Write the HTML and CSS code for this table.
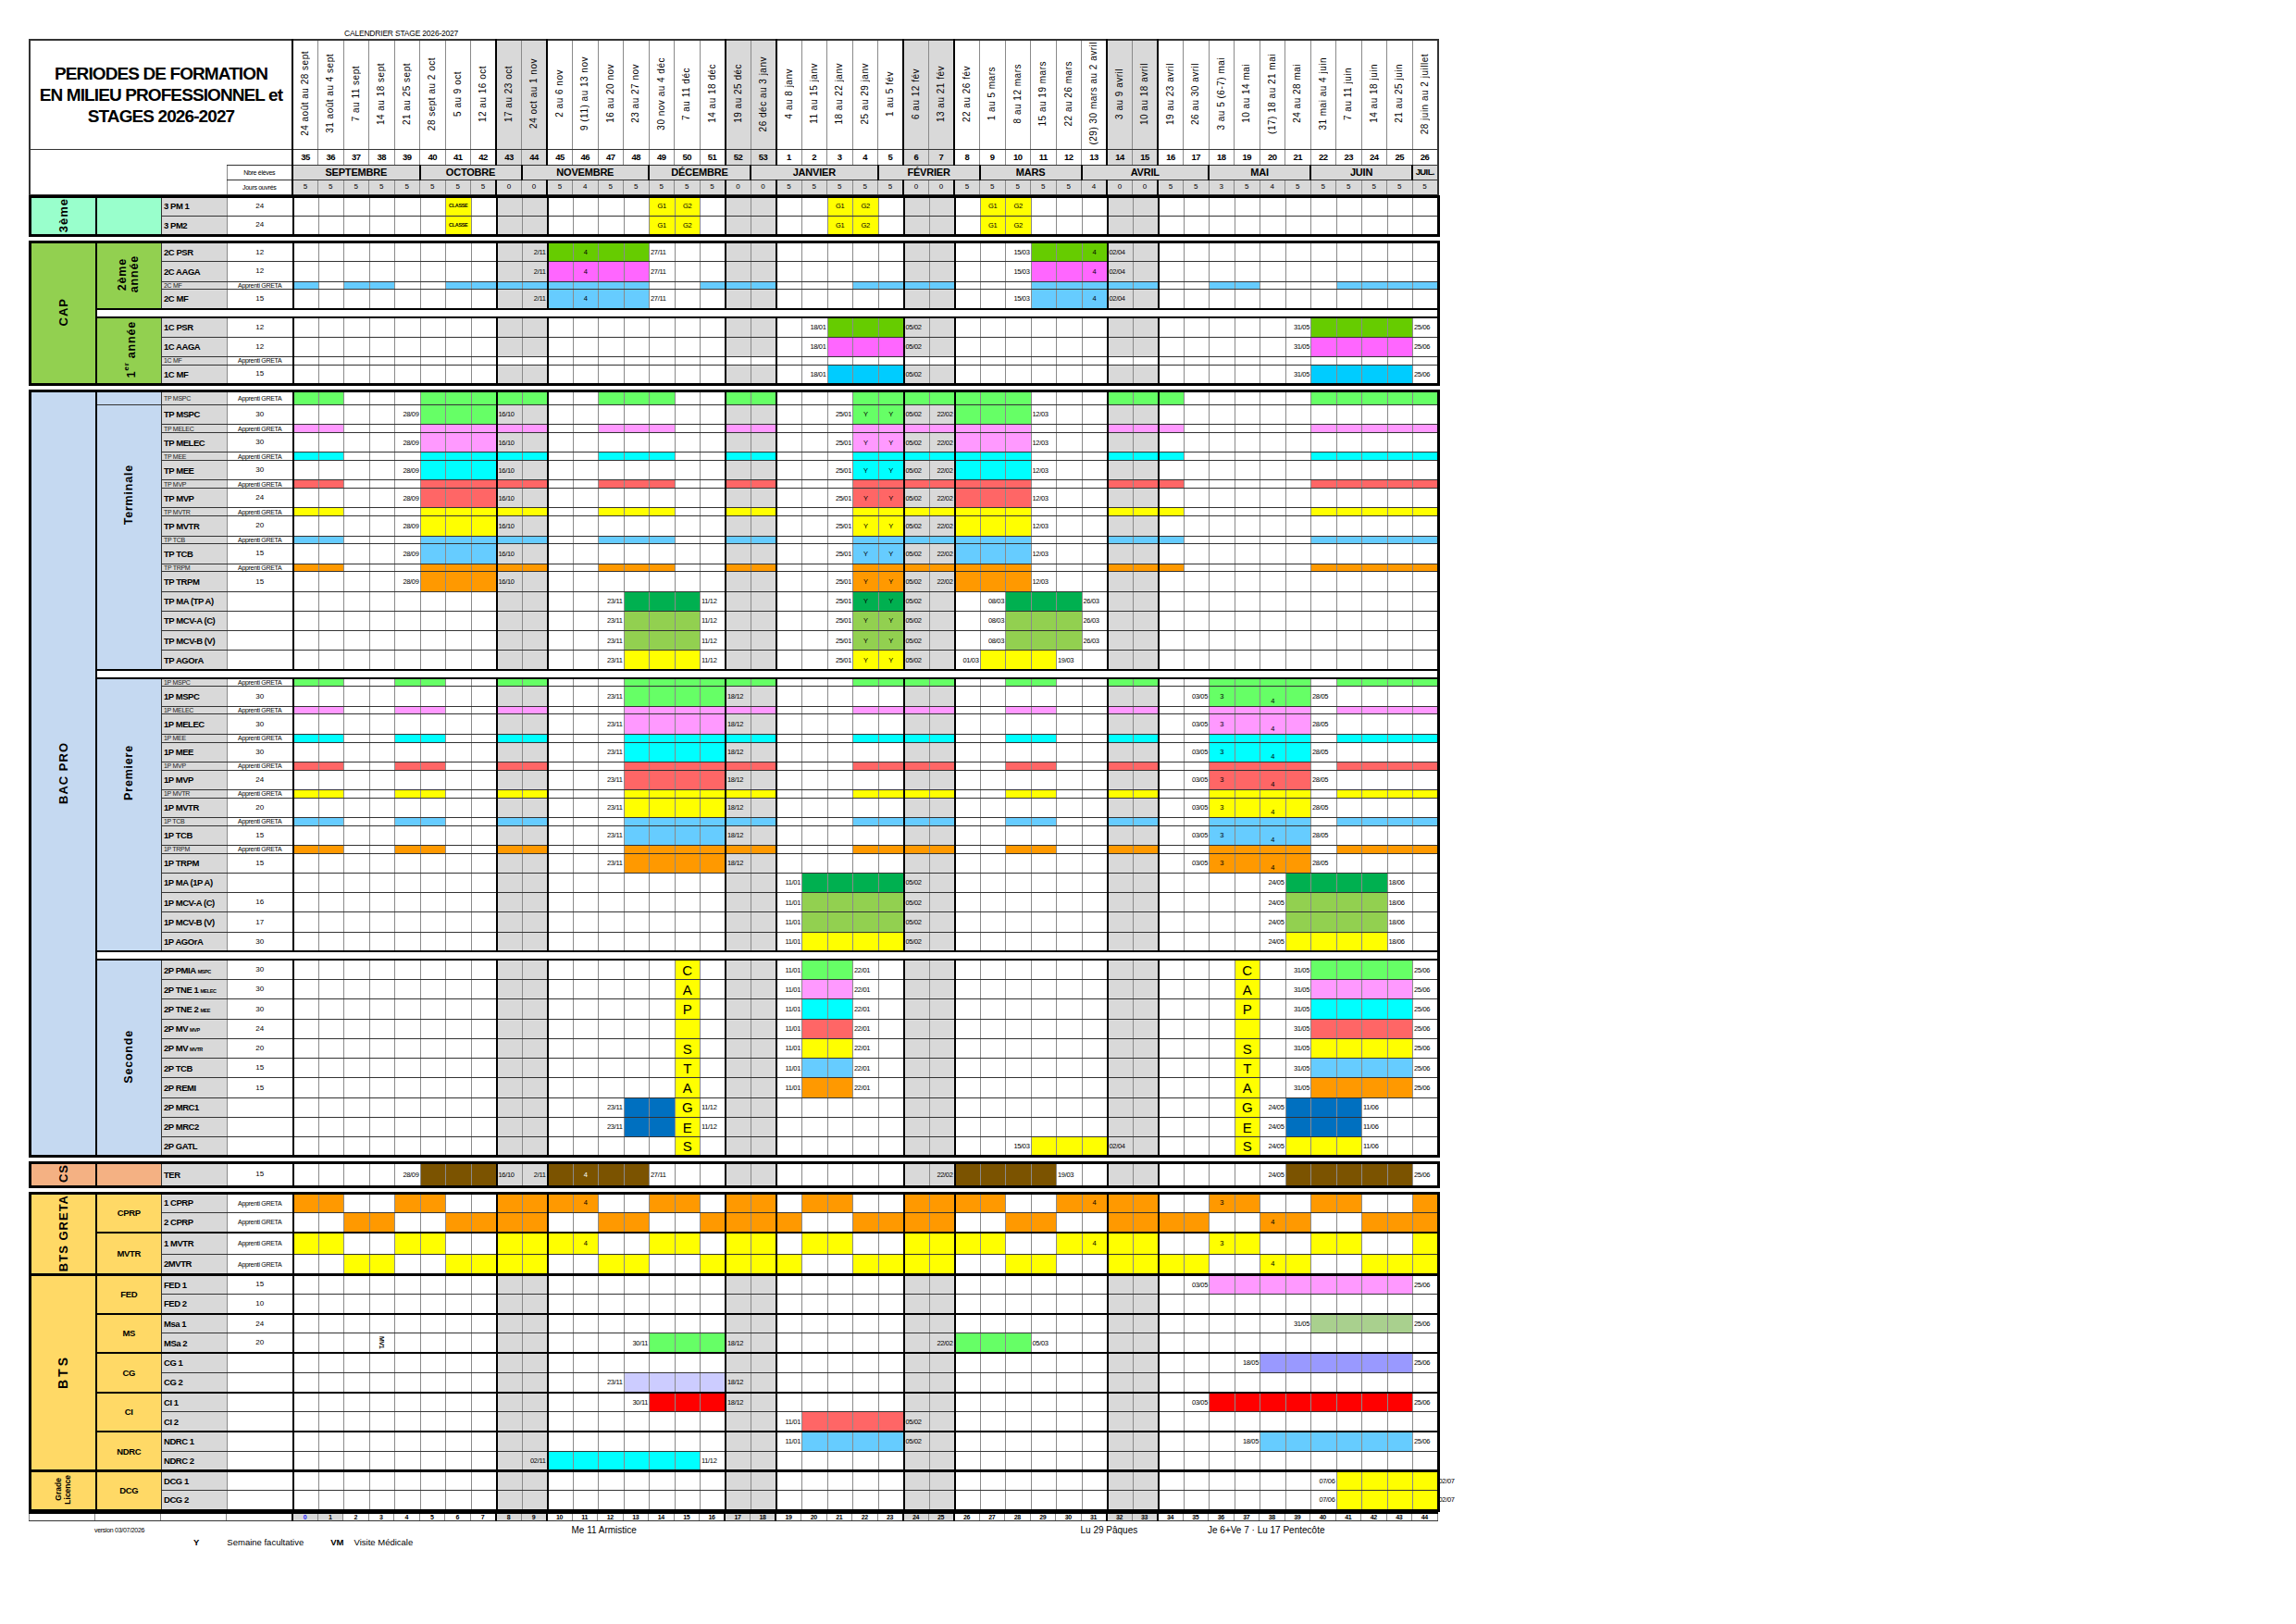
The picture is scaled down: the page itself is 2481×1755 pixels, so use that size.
FILE: index.html
```html
<!DOCTYPE html>
<html lang="fr">
<head>
<meta charset="utf-8">
<title>Calendrier stage 2026-2027</title>
<link rel="stylesheet" href="styles.css">
</head>
<body>
<div class="page">
  <div class="caption">CALENDRIER STAGE 2026-2027</div>
  <table class="grid head" id="head">
    <colgroup id="hcols"></colgroup>
    <tr class="r-dates" id="rDates">
      <th colspan="4" class="title">PERIODES DE FORMATION<br>EN MILIEU PROFESSIONNEL et<br>STAGES 2026-2027</th>
    </tr>
    <tr class="r-week" id="rWeek">
      <th colspan="3" rowspan="3" class="blank"></th>
      <th class="blank2"></th>
    </tr>
    <tr class="r-month" id="rMonth"><th class="hl">Nbre élèves</th></tr>
    <tr class="r-jours" id="rJours"><th class="hl">Jours ouvrés</th></tr>
  </table>
  <div id="body"></div>
  <div class="notes">
    <div class="nrow1">
      <span class="ver">version 03/07/2026</span>
      <span class="n-arm">Me 11 Armistice</span>
      <span class="n-paq">Lu 29 Pâques</span>
      <span class="n-pen">Je 6+Ve 7 · Lu 17 Pentecôte</span>
    </div>
    <div class="nrow2">
      <b class="k-y">Y</b><span class="v-y">Semaine facultative</span>
      <b class="k-vm">VM</b><span class="v-vm">Visite Médicale</span>
    </div>
  </div>
</div>
<script src="script.js"></script>
</body>
</html>
```

FILE: styles.css
```css
* { box-sizing: border-box; }
html, body { margin: 0; background: #fff; }
body { font-family: "Liberation Sans", Arial, Helvetica, sans-serif; color: #000; }

.page { padding: 31px 0 0 31px; width: 2481px; min-height: 1755px; }
.caption { height: 11px; padding-left: 341px; font-size: 8.5px; line-height: 11px; letter-spacing: -.2px; white-space: nowrap; }

.grid { border-collapse: collapse; table-layout: fixed; width: 1521.5px; }
.grid col.lc { width: 71px; }
.grid col.wc { width: 27.5px; }
.grid td, .grid th {
  padding: 0;
  border: 1px solid #8a8a8a;
  border-top-color: #333;
  border-bottom-color: #333;
  font-weight: normal;
  font-size: 8px;
  line-height: 1;
  text-align: center;
  vertical-align: middle;
  white-space: nowrap;
}
.rot { display: inline-block; writing-mode: vertical-rl; transform: rotate(180deg); white-space: nowrap; }

/* header */
.head { border: 2px solid #333; border-bottom: 0; }
.head .r-dates { height: 118px; }
.head .title { font-size: 19px; font-weight: bold; line-height: 23px; letter-spacing: -.9px; border-right: 2px solid #000; }
.head .d { font-size: 10px; letter-spacing: .5px; }
.head .r-week { height: 17px; }
.head .r-week th { font-weight: bold; font-size: 9.5px; letter-spacing: -.4px; }
.head .r-month { height: 16px; }
.head .m { background: #d9d9d9; font-weight: bold; font-size: 11px; letter-spacing: -.2px; border-left: 2px solid #000; }
.head .m.short { font-size: 9.5px; letter-spacing: -.6px; }
.head .r-jours { height: 16px; }
.head .j { background: #d9d9d9; font-size: 8px; }
.head .hl { font-size: 7px; letter-spacing: -.3px; border-right: 2px solid #000; }
.head .blank { border-right: none; }
.head .blank2 { border-left: none; border-right: 2px solid #000; }

/* blocks */
.blk { margin-top: 4px; border: 3px solid #000; }
.blk.first { margin-top: 0; }
tr.n { height: 21.25px; }
tr.t { height: 8.8px; }
tr.sp { height: 9px; }
.grid tr.sp td { border-top: 2px solid #000; border-bottom: 2px solid #000; background: #fff; }
.grid tr.gt td { border-top: 2px solid #000; }
.grid tbody.sec tr:first-child td { border-top: 3px solid #000; }

.grid .ca { border-right: 2px solid #000; font-weight: bold; font-size: 13px; letter-spacing: 1px; }
.grid .ca.sm { font-size: 8.5px; letter-spacing: 0; line-height: 10px; }
.grid .ca.wide { letter-spacing: 3px; font-size: 14px; }
.grid .cb { font-weight: bold; font-size: 12.5px; letter-spacing: .8px; line-height: 13px; border-right: 1px solid #333; }
.grid .cb.hz { font-size: 9.5px; letter-spacing: -.3px; }
.grid .cb.up { padding-bottom: 88px; }
.cb sup { font-size: 8px; }

.s-mint { background: #99ffcc; }
.s-cap { background: #92d050; }
.s-bac { background: #c5d9f1; }
.s-cs { background: #f4b183; }
.s-gold { background: #ffd966; }

.grid .lab { background: #d9d9d9; text-align: left; font-weight: bold; font-size: 9.5px; letter-spacing: -.45px; padding-left: 2px; }
.grid tr.t .lab { font-weight: normal; font-size: 7px; line-height: 7px; color: #222; letter-spacing: -.3px; }
.lab small { font-size: 5.5px; font-weight: bold; margin-left: 2px; }
.grid .num { font-size: 8px; border-right: 2px solid #000; }
.grid .num.ap, .grid tr.t .num { font-size: 7px; letter-spacing: -.3px; }

.grid .h { background: #d9d9d9; }
.grid .tk { border-left: 2px solid #000; }
.grid .x { font-size: 7.5px; letter-spacing: -.35px; }
.grid .al { text-align: left; padding-left: 1px; }
.grid .ar { text-align: right; padding-right: 1px; }
.grid .lo { vertical-align: bottom; padding-bottom: 1px; }
.grid .wt { color: #fff; }
.grid .cl { font-size: 5.5px; font-weight: bold; letter-spacing: -.3px; overflow: hidden; }
.grid .cap { font-size: 15px; letter-spacing: 0; }
.vt { display: inline-block; writing-mode: vertical-rl; font-weight: bold; font-size: 7px; }
.rel { position: relative; }
.out { position: absolute; left: 100%; top: 6px; padding-left: 2px; font-size: 7.5px; letter-spacing: -.35px; }

.f-y { background: #ffff00; }
.f-g1 { background: #66cc00; }
.f-mag { background: #ff66ff; }
.f-b { background: #66ccff; }
.f-cy2 { background: #00ccff; }
.f-lg { background: #66ff66; }
.f-pk { background: #ff99ff; }
.f-cy { background: #00ffff; }
.f-rd { background: #ff6666; }
.f-or { background: #ff9900; }
.f-dg { background: #00b050; }
.f-mg { background: #92d050; }
.f-db { background: #0070c0; }
.f-br { background: #7b5300; }
.f-sg { background: #a9d08e; }
.f-lv { background: #9999ff; }
.f-lv2 { background: #ccccff; }
.f-red { background: #ff0000; }

/* index row */
.idxrow { border: 1px solid #333; border-top: 2px solid #000; }
.idxrow tr { height: 9px; }
.grid.idxrow td { font-size: 7px; font-weight: bold; letter-spacing: -.3px; }
.grid.idxrow td.zero { color: #1a1aff; }

/* notes */
.notes { margin-top: 2px; }
.nrow1 { display: grid; grid-template-columns: repeat(4, 71px) repeat(45, 27.5px); height: 14px; align-items: center; white-space: nowrap; }
.ver { grid-column: 2 / span 3; font-size: 7px; letter-spacing: -.3px; }
.n-arm { grid-column: 16 / span 6; font-size: 10px; }
.n-paq { grid-column: 36 / span 5; font-size: 10px; }
.n-pen { grid-column: 41 / span 9; font-size: 10px; }
.nrow2 { display: flex; align-items: baseline; margin-top: 1px; white-space: nowrap; font-size: 9.5px; }
.k-y { margin-left: 178px; font-size: 9.5px; }
.v-y { margin-left: 30px; }
.k-vm { margin-left: 29px; }
.v-vm { margin-left: 11px; }
```

FILE: script.js
```js
(function () {
  var WEEKS = [];
  for (var w = 35; w <= 53; w++) WEEKS.push(w);
  for (w = 1; w <= 26; w++) WEEKS.push(w);
  var N = WEEKS.length;
  function idx(w) { return w >= 35 ? w - 35 : w + 18; }
  var HOL = new Set([8, 9, 17, 18, 24, 25, 32, 33]);
  var TK = new Set([0, 8, 10, 17, 19, 24, 26, 32, 34]);

  var DATES = ["24 août au 28 sept", "31 août au 4 sept", "7 au 11 sept", "14 au 18 sept", "21 au 25 sept",
    "28 sept au 2 oct", "5 au 9 oct", "12 au 16 oct", "17 au 23 oct", "24 oct au 1 nov", "2 au 6 nov",
    "9 (11) au 13 nov", "16 au 20 nov", "23 au 27 nov", "30 nov au 4 déc", "7 au 11 déc", "14 au 18 déc",
    "19 au 25 déc", "26 déc au 3 janv", "4 au 8 janv", "11 au 15 janv", "18 au 22 janv", "25 au 29 janv",
    "1 au 5 fév", "6 au 12 fév", "13 au 21 fév", "22 au 26 fév", "1 au 5 mars", "8 au 12 mars",
    "15 au 19 mars", "22 au 26 mars", "(29) 30 mars au 2 avril", "3 au 9 avril", "10 au 18 avril",
    "19 au 23 avril", "26 au 30 avril", "3 au 5 (6-7) mai", "10 au 14 mai", "(17) 18 au 21 mai",
    "24 au 28 mai", "31 mai au 4 juin", "7 au 11 juin", "14 au 18 juin", "21 au 25 juin", "28 juin au 2 juillet"];
  var JOURS = [5,5,5,5,5,5,5,5,0,0,5,4,5,5,5,5,5,0,0,5,5,5,5,5,0,0,5,5,5,5,5,4,0,0,5,5,3,5,4,5,5,5,5,5,5];
  var MONTHS = [["SEPTEMBRE",5],["OCTOBRE",4],["NOVEMBRE",5],["DÉCEMBRE",4],["JANVIER",5],["FÉVRIER",4],
    ["MARS",4],["AVRIL",5],["MAI",4],["JUIN",4],["JUIL.",1]];

  function cols() {
    var s = "";
    for (var i = 0; i < 4; i++) s += '<col class="lc">';
    for (i = 0; i < N; i++) s += '<col class="wc">';
    return s;
  }
  function cls(arr) { return arr.length ? ' class="' + arr.join(" ") + '"' : ""; }

  /* header */
  document.getElementById("hcols").innerHTML = cols();
  var rD = document.getElementById("rDates"), rW = document.getElementById("rWeek"),
      rM = document.getElementById("rMonth"), rJ = document.getElementById("rJours");
  var hD = "", hW = "", hM = "", hJ = "";
  for (var i = 0; i < N; i++) {
    var c = [];
    if (HOL.has(i)) c.push("h");
    if (TK.has(i)) c.push("tk");
    hD += "<th" + cls(["d"].concat(c)) + '><span class="rot">' + DATES[i] + "</span></th>";
    hW += "<th" + cls(c) + ">" + WEEKS[i] + "</th>";
    hJ += "<th" + cls(["j"].concat(TK.has(i) ? ["tk"] : [])) + ">" + JOURS[i] + "</th>";
  }
  MONTHS.forEach(function (m) {
    hM += '<th class="m' + (m[1] === 1 ? " short" : "") + '" colspan="' + m[1] + '">' + m[0] + "</th>";
  });
  rD.insertAdjacentHTML("beforeend", hD);
  rW.insertAdjacentHTML("beforeend", hW);
  rM.insertAdjacentHTML("beforeend", hM);
  rJ.insertAdjacentHTML("beforeend", hJ);

  /* row builders */
  var PAT_T = ["35-36","40-44","47-49","52-53","4-10","14-16","22-26"];
  var PAT_P = ["35-36","39-40","43-44","48-53","4-7","10-11","14-15","18-21","23-26"];
  var PAT_MF = ["35","37-38","41-48","51-53","4-7","11-15","18-19","23-26"];
  var P1 = ["35-36","39-40","43-46","49-50","52-53","2-3","6-9","12-15","18-19","22-23","26"];
  var P2 = ["37-38","41-44","47-48","51-1","4-7","10-11","14-17","20-21","24-26"];

  function g(l, c, pat) { return { thin: 1, l: l, n: "Apprenti GRETA", nog: 1, f: c ? [[c].concat(pat)] : [] }; }
  function r3(l) {
    return { l: l, n: "24", f: [["y","41","49-50","3-4","9-10"]],
      t: [[41,"CLASSE","cl"],[49,"G1"],[50,"G2"],[3,"G1"],[4,"G2"],[9,"G1"],[10,"G2"]] };
  }
  function c2(l, n, c) {
    return { l: l, n: n, f: [[c,"45-48","11-13"]],
      t: [[44,"2/11"],[46,"4"],[49,"27/11"],[10,"15/03"],[13,"4"],[14,"02/04"]] };
  }
  function c1(l, n, c) {
    return { l: l, n: n, f: [[c,"3-5","22-25"]], t: [[2,"18/01"],[6,"05/02"],[21,"31/05"],[26,"25/06"]] };
  }
  function tr(l, n, c) {
    return { l: l, n: n, f: [[c,"40-42","4-5","8-10"]],
      t: [[39,"28/09"],[43,"16/10"],[3,"25/01"],[4,"Y"],[5,"Y"],[6,"05/02"],[7,"22/02"],[11,"12/03"]] };
  }
  function ma(l, c) {
    return { l: l, n: "", f: [[c,"48-50","4-5","10-12"]],
      t: [[47,"23/11"],[51,"11/12"],[3,"25/01"],[4,"Y"],[5,"Y"],[6,"05/02"],[9,"08/03"],[13,"26/03"]] };
  }
  function pr(l, n, c) {
    return { l: l, n: n, f: [[c,"48-51","18-21"]],
      t: [[47,"23/11"],[52,"18/12"],[17,"03/05"],[18,"3"],[20,"4","lo"],[22,"28/05"]] };
  }
  function pm(l, n, c) {
    return { l: l, n: n, f: [[c,"2-5","21-24"]], t: [[1,"11/01"],[6,"05/02"],[20,"24/05"],[25,"18/06"]] };
  }
  function se(l, n, c, cap) {
    return { l: l, n: n, cap: cap, f: [[c,"2-3","22-25"]], t: [[1,"11/01"],[4,"22/01"],[21,"31/05"],[26,"25/06"]] };
  }
  function mrc(l, cap) {
    return { l: l, n: "", cap: cap, f: [["db","48-49","21-23"]], t: [[47,"23/11"],[51,"11/12"],[20,"24/05"],[24,"11/06"]] };
  }

  var BLOCKS = [
    [{ a: "3ème", ac: "s-mint", groups: [{ b: "", rows: [r3("3 PM 1"), r3("3 PM2")] }] }],
    [{ a: "CAP", ac: "s-cap", groups: [
      { b: "2ème<br>année", rows: [c2("2C PSR","12","g1"), c2("2C AAGA","12","mag"), g("2C MF","b",PAT_MF), c2("2C MF","15","b")] },
      "sp",
      { b: "1<sup>er</sup> année", rows: [c1("1C PSR","12","g1"), c1("1C AAGA","12","mag"), g("1C MF",null,[]), c1("1C MF","15","cy2")] }
    ] }],
    [{ a: "BAC PRO", ac: "s-bac", groups: [
      { b: "", rows: [g("TP MSPC","lg",PAT_T)] },
      { b: "Terminale", up: 1, rows: [
        tr("TP MSPC","30","lg"), g("TP MELEC","pk",PAT_T), tr("TP MELEC","30","pk"),
        g("TP MEE","cy",PAT_T), tr("TP MEE","30","cy"), g("TP MVP","rd",PAT_T), tr("TP MVP","24","rd"),
        g("TP MVTR","y",PAT_T), tr("TP MVTR","20","y"), g("TP TCB","b",PAT_T), tr("TP TCB","15","b"),
        g("TP TRPM","or",PAT_T), tr("TP TRPM","15","or"),
        ma("TP MA (TP A)","dg"), ma("TP MCV-A (C)","mg"), ma("TP MCV-B (V)","mg"),
        { l: "TP AGOrA", n: "", f: [["y","48-50","4-5","9-11"]],
          t: [[47,"23/11"],[51,"11/12"],[3,"25/01"],[4,"Y"],[5,"Y"],[6,"05/02"],[8,"01/03"],[12,"19/03"]] }
      ] },
      "sp",
      { b: "Premiere", up: 1, rows: [
        g("1P MSPC","lg",PAT_P), pr("1P MSPC","30","lg"), g("1P MELEC","pk",PAT_P), pr("1P MELEC","30","pk"),
        g("1P MEE","cy",PAT_P), pr("1P MEE","30","cy"), g("1P MVP","rd",PAT_P), pr("1P MVP","24","rd"),
        g("1P MVTR","y",PAT_P), pr("1P MVTR","20","y"), g("1P TCB","b",PAT_P), pr("1P TCB","15","b"),
        g("1P TRPM","or",PAT_P), pr("1P TRPM","15","or"),
        pm("1P MA (1P A)","","dg"), pm("1P MCV-A (C)","16","mg"), pm("1P MCV-B (V)","17","mg"), pm("1P AGOrA","30","y")
      ] },
      "sp",
      { b: "Seconde", rows: [
        se("2P PMIA<small>MSPC</small>","30","lg","C"), se("2P TNE 1<small>MELEC</small>","30","pk","A"),
        se("2P TNE 2<small>MEE</small>","30","cy","P"), se("2P MV<small>MVP</small>","24","rd",""),
        se("2P MV<small>MVTR</small>","20","y","S"), se("2P TCB","15","b","T"), se("2P REMI","15","or","A"),
        mrc("2P MRC1","G"), mrc("2P MRC2","E"),
        { l: "2P GATL", n: "", cap: "S", f: [["y","11-13","21-23"]], t: [[10,"15/03"],[14,"02/04"],[20,"24/05"],[24,"11/06"]] }
      ] }
    ] }],
    [{ a: "CS", ac: "s-cs", groups: [{ b: "", rows: [
      { l: "TER", n: "15", f: [["br","40-42","45-48","8-11","21-25"]],
        t: [[39,"28/09"],[43,"16/10"],[44,"2/11"],[46,"4","wt"],[49,"27/11"],[7,"22/02"],[12,"19/03"],[20,"24/05"],[26,"25/06"]] }
    ] }] }],
    [
      { a: "BTS GRETA", ac: "s-gold", groups: [
        { b: "CPRP", hz: 1, rows: [
          { l: "1 CPRP", n: "Apprenti GRETA", nog: 1, f: [["or"].concat(P1)], t: [[46,"4"],[13,"4"],[18,"3"]] },
          { l: "2 CPRP", n: "Apprenti GRETA", nog: 1, f: [["or"].concat(P2)], t: [[20,"4"]] }
        ] },
        { b: "MVTR", hz: 1, tk: 1, rows: [
          { l: "1 MVTR", n: "Apprenti GRETA", nog: 1, f: [["y"].concat(P1)], t: [[46,"4"],[13,"4"],[18,"3"]] },
          { l: "2MVTR", n: "Apprenti GRETA", nog: 1, f: [["y"].concat(P2)], t: [[20,"4"]] }
        ] }
      ] },
      { a: "BTS", ac: "s-gold wide", groups: [
        { b: "FED", hz: 1, rows: [
          { l: "FED 1", n: "15", f: [["pk","18-25"]], t: [[17,"03/05"],[26,"25/06"]] },
          { l: "FED 2", n: "10" }
        ] },
        { b: "MS", hz: 1, tk: 1, rows: [
          { l: "Msa 1", n: "24", f: [["sg","22-25"]], t: [[21,"31/05"],[26,"25/06"]] },
          { l: "MSa 2", n: "20", f: [["lg","49-51","8-10"]], t: [[38,"MV1","mv"],[48,"30/11"],[52,"18/12"],[7,"22/02"],[11,"05/03"]] }
        ] },
        { b: "CG", hz: 1, tk: 1, rows: [
          { l: "CG 1", n: "", f: [["lv","20-25"]], t: [[19,"18/05"],[26,"25/06"]] },
          { l: "CG 2", n: "", f: [["lv2","48-51"]], t: [[47,"23/11"],[52,"18/12"]] }
        ] },
        { b: "CI", hz: 1, tk: 1, rows: [
          { l: "CI 1", n: "", f: [["red","49-51","18-25"]], t: [[48,"30/11"],[52,"18/12"],[17,"03/05"],[26,"25/06"]] },
          { l: "CI 2", n: "", f: [["rd","2-5"]], t: [[1,"11/01"],[6,"05/02"]] }
        ] },
        { b: "NDRC", hz: 1, tk: 1, rows: [
          { l: "NDRC 1", n: "", f: [["b","2-5","20-25"]], t: [[1,"11/01"],[6,"05/02"],[19,"18/05"],[26,"25/06"]] },
          { l: "NDRC 2", n: "", f: [["cy","45-50"]], t: [[44,"02/11"],[51,"11/12"]] }
        ] }
      ] },
      { a: "Grade<br>Licence", ac: "s-gold sm", groups: [
        { b: "DCG", hz: 1, rows: [
          { l: "DCG 1", n: "", f: [["y","23-26"]], t: [[22,"07/06"]], after: "02/07" },
          { l: "DCG 2", n: "", f: [["y","23-26"]], t: [[22,"07/06"]], after: "02/07" }
        ] }
      ] }
    ]
  ];

  function dataCells(r) {
    var m = new Array(N).fill(null), t = {};
    (r.f || []).forEach(function (f) {
      var c = f[0];
      f.slice(1).forEach(function (s) {
        var p = String(s).split("-").map(Number);
        var a = idx(p[0]), b = idx(p.length > 1 ? p[1] : p[0]);
        for (var i = a; i <= b; i++) m[i] = c;
      });
    });
    (r.t || []).forEach(function (x) { t[idx(x[0])] = { s: x[1], c: x[2] }; });
    if (r.cap !== undefined) {
      [50, 19].forEach(function (w) { var i = idx(w); m[i] = "y"; t[i] = { s: r.cap, c: "cap" }; });
    }
    var h = "";
    for (var i = 0; i < N; i++) {
      var c = [], txt = "";
      if (m[i]) c.push("f-" + m[i]); else if (!r.nog && HOL.has(i)) c.push("h");
      if (TK.has(i)) c.push("tk");
      if (t[i]) {
        txt = t[i].s;
        c.push("x");
        if (t[i].c === "mv") txt = '<span class="vt">' + txt + "</span>";
        else if (t[i].c) c.push(t[i].c);
        if (!m[i] && t[i].c !== "mv") c.push(m[i + 1] ? "ar" : "al");
      }
      if (i === N - 1 && r.after) { c.push("rel"); txt += '<span class="out">' + r.after + "</span>"; }
      h += "<td" + cls(c) + ">" + txt + "</td>";
    }
    return h;
  }

  function sectionHTML(sec, isSec) {
    var total = 0;
    sec.groups.forEach(function (gr) { total += gr === "sp" ? 1 : gr.rows.length; });
    var h = "<tbody" + (isSec ? ' class="sec"' : "") + ">", first = true;
    var bg = sec.ac.split(" ")[0];
    sec.groups.forEach(function (gr) {
      if (gr === "sp") { h += '<tr class="sp"><td colspan="48"></td></tr>'; return; }
      gr.rows.forEach(function (r, ri) {
        var rc = r.thin ? "t" : "n";
        if (ri === 0 && gr.tk) rc += " gt";
        h += '<tr class="' + rc + '">';
        if (first) {
          h += '<td class="ca ' + sec.ac + '" rowspan="' + total + '"><span class="rot">' + sec.a + "</span></td>";
          first = false;
        }
        if (ri === 0) {
          if (gr.hz) h += '<td class="cb hz ' + bg + '" rowspan="' + gr.rows.length + '">' + gr.b + "</td>";
          else h += '<td class="cb ' + bg + (gr.up ? " up" : "") + '" rowspan="' + gr.rows.length + '"><span class="rot">' + gr.b + "</span></td>";
        }
        var n = r.n || "";
        h += '<td class="lab">' + r.l + '</td><td class="num' + (n.length > 4 ? " ap" : "") + '">' + n + "</td>";
        h += dataCells(r);
        h += "</tr>";
      });
    });
    return h + "</tbody>";
  }

  var html = "";
  BLOCKS.forEach(function (blk, bi) {
    html += '<table class="grid blk' + (bi === 0 ? " first" : "") + '"><colgroup>' + cols() + "</colgroup>";
    blk.forEach(function (sec, si) { html += sectionHTML(sec, si > 0); });
    html += "</table>";
  });
  var ir = "<tr><td></td><td></td><td></td><td></td>";
  for (i = 0; i < N; i++) {
    var ic = [];
    if (HOL.has(i) || i < 2) ic.push("h");
    if (TK.has(i)) ic.push("tk");
    if (i === 0) ic.push("zero");
    ir += "<td" + cls(ic) + ">" + i + "</td>";
  }
  html += '<table class="grid idxrow"><colgroup>' + cols() + "</colgroup>" + ir + "</tr></table>";
  document.getElementById("body").innerHTML = html;
})();
```
